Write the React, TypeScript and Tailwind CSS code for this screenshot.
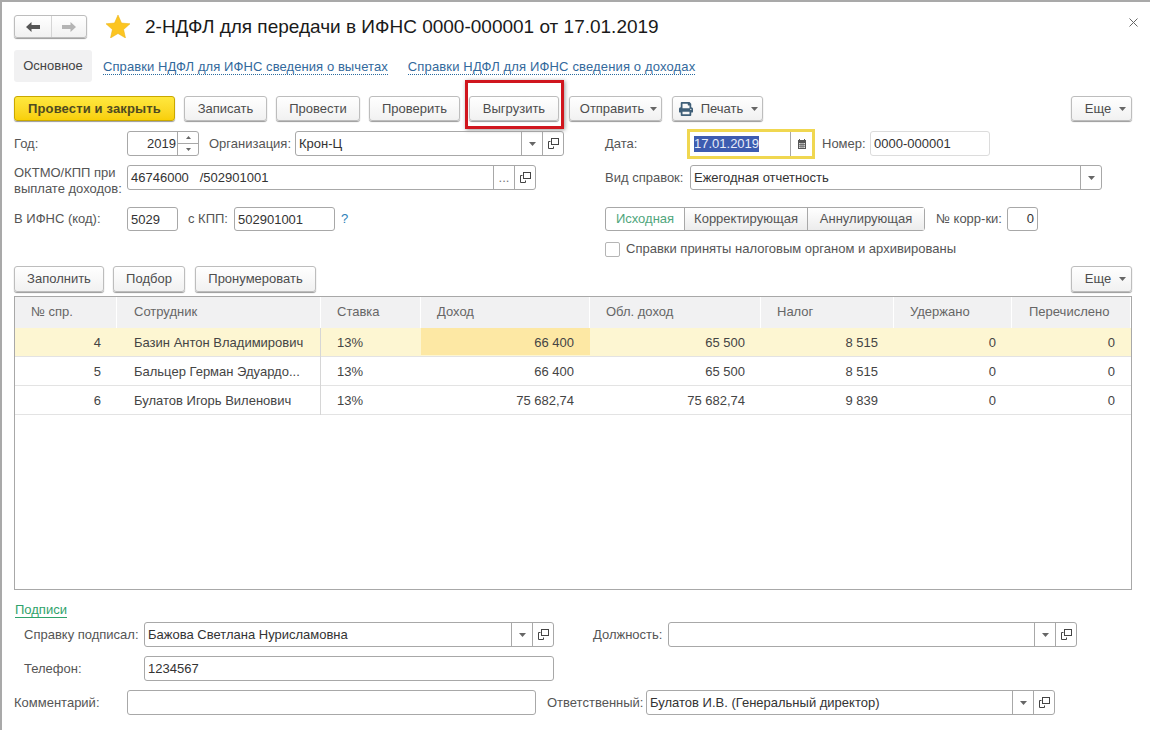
import { FaPrint } from "react-icons/fa"

const rows = [
  { n: "4", name: "Базин Антон Владимирович", income: "66 400", taxable: "65 500", tax: "8 515", active: true },
  { n: "5", name: "Бальцер Герман Эдуардо...", income: "66 400", taxable: "65 500", tax: "8 515", active: false },
  { n: "6", name: "Булатов Игорь Виленович", income: "75 682,74", taxable: "75 682,74", tax: "9 839", active: false },
]

function Caret() {
  return (
    <svg width="7" height="4" viewBox="0 0 7 4" className="shrink-0">
      <path d="M0 0h7L3.500 4z" fill="#666" />
    </svg>
  )
}

function OpenIcon() {
  return (
    <svg width="11" height="11" viewBox="0 0 11 11" fill="none" stroke="#444" strokeWidth="1">
      <rect x="3.500" y="0.500" width="7" height="6" fill="#fff" />
      <path d="M2.500 3.500H0.500V10.500H5.500V8.500" />
    </svg>
  )
}

function Btn({ className, children }: { className: string; children: React.ReactNode }) {
  return (
    <div
      className={
        "flex items-center justify-center rounded-[3px] border border-[#bdbdbd] bg-gradient-to-b from-white to-[#f1f1f1] text-[13px] text-[#4d4d4d] shadow-[0_1px_1px_#9a9a9a] " +
        className
      }
    >
      {children}
    </div>
  )
}

function Field({
  className,
  value,
  kind,
}: {
  className: string
  value?: string
  kind?: "select" | "dots" | "dropdown"
}) {
  return (
    <div className={"flex h-full items-stretch rounded-[3px] border border-[#a8a8a8] bg-white " + className}>
      <div className="min-w-0 flex-1 overflow-hidden pl-[3px] leading-[23px] whitespace-pre text-[#333]">{value}</div>
      {kind && (
        <div className="flex w-[21px] shrink-0 items-center justify-center border-l border-[#a8a8a8]">
          {kind === "dots" ? <span className="text-[#777]">...</span> : <Caret />}
        </div>
      )}
      {(kind === "select" || kind === "dots") && (
        <div className="flex w-[21px] shrink-0 items-center justify-center border-l border-[#a8a8a8]">
          <OpenIcon />
        </div>
      )}
    </div>
  )
}

function Label({ className, children }: { className: string; children: React.ReactNode }) {
  return <div className={"shrink-0 text-[#555] " + className}>{children}</div>
}

function HeadCell({ children, className }: { children: React.ReactNode; className: string }) {
  return <div className={"flex items-center border-r border-white pb-[2px] text-[#666] " + className}>{children}</div>
}

export default function App() {
  return (
    <div className="relative h-[730px] w-[1150px] overflow-hidden border-t-2 border-l-2 border-[#a9a9a9] bg-white pl-3 font-['Liberation_Sans',Arial,sans-serif] text-[13px]">
      {/* шапка */}
      <div className="mt-[13px] flex h-[23px] items-center">
        <div className="flex h-full w-[73px] rounded-[3px] border border-[#bdbdbd] bg-gradient-to-b from-white to-[#f1f1f1] shadow-[0_1px_1px_#9a9a9a]">
          <div className="flex w-[37px] items-center justify-center border-r border-[#d5d5d5]">
            <svg width="14" height="10" viewBox="0 0 14 10">
              <path d="M0 5l5.500-5v3H14v4H5.500v3z" fill="#555" />
            </svg>
          </div>
          <div className="flex flex-1 items-center justify-center">
            <svg width="14" height="10" viewBox="0 0 14 10">
              <path d="M14 5L8.500 0v3H0v4h8.500v3z" fill="#b4b4b4" />
            </svg>
          </div>
        </div>
        <svg width="24" height="23" viewBox="0 0 24 23" className="ml-[19px]">
          <path d="M12 0l3.500 8 8.500.8-6.400 5.700L19.500 23 12 18.500 4.500 23l1.900-8.500L0 8.800 8.500 8z" fill="#fcc521" stroke="#e9b010" strokeWidth="0.500" />
        </svg>
        <h1 className="ml-[15px] pt-[1px] text-[19px] font-normal text-[#1a1a1a]">
          2-НДФЛ для передачи в ИФНС 0000-000001 от 17.01.2019
        </h1>
        <svg width="9" height="9" viewBox="0 0 9 9" className="ml-auto mr-[12px] -mt-[8px]" stroke="#666" strokeWidth="1">
          <path d="M0.500 0.500l8 8M8.500 0.500l-8 8" />
        </svg>
      </div>

      {/* вкладки */}
      <div className="mt-[12px] flex h-[32px] items-center">
        <div className="flex h-full w-[78px] items-center justify-center rounded-[3px] bg-[#f1f1f2] text-[#444]">Основное</div>
        <a className="mt-[2px] ml-[11px] border-b border-dotted border-[#2a6a9e] leading-[15px] tracking-[0.08px] text-[#33699c]">Справки НДФЛ для ИФНС сведения о вычетах</a>
        <a className="mt-[2px] ml-[20px] border-b border-dotted border-[#2a6a9e] leading-[15px] tracking-[0.15px] text-[#33699c]">Справки НДФЛ для ИФНС сведения о доходах</a>
      </div>

      {/* команды */}
      <div className="mt-[14px] flex h-[25px]">
        <div className="flex w-[161px] items-center justify-center rounded-[3px] border border-[#c9a800] bg-gradient-to-b from-[#ffe83d] to-[#f8cf06] font-bold tracking-[0.15px] text-[#4f4a20] shadow-[0_1px_1px_#9a9a9a]">
          Провести и закрыть
        </div>
        <Btn className="ml-[9px] w-[83px]">Записать</Btn>
        <Btn className="ml-[9px] w-[84px]">Провести</Btn>
        <Btn className="ml-[9px] w-[91px]">Проверить</Btn>
        <Btn className="ml-[9px] w-[90px]">Выгрузить</Btn>
        <Btn className="ml-[10px] w-[93px] gap-[6px] pl-[6px]">
          Отправить <Caret />
        </Btn>
        <Btn className="ml-[10px] w-[91px] gap-[8px] pl-[2px]">
          <FaPrint className="text-[14px] text-[#3f5f78]" /> Печать <Caret />
        </Btn>
        <Btn className="ml-auto mr-[18px] w-[61px] gap-[8px] pl-[8px]">
          Еще <Caret />
        </Btn>
      </div>

      {/* реквизиты */}
      <div className="mt-[10px] flex h-[25px] items-center">
        <Label className="w-[113px]">Год:</Label>
        <div className="flex h-full w-[72px] rounded-[3px] border border-[#a8a8a8]">
          <div className="flex-1 pr-[1px] text-right leading-[23px] text-[#333]">2019</div>
          <div className="flex w-[21px] flex-col border-l border-[#a8a8a8]">
            <div className="flex flex-1 items-center justify-center border-b border-[#a8a8a8]">
              <svg width="5" height="3" viewBox="0 0 5 3"><path d="M0 3h5L2.500 0z" fill="#666" /></svg>
            </div>
            <div className="flex flex-1 items-center justify-center">
              <svg width="5" height="3" viewBox="0 0 5 3"><path d="M0 0h5L2.500 3z" fill="#666" /></svg>
            </div>
          </div>
        </div>
        <Label className="ml-[10px] w-[86px]">Организация:</Label>
        <Field className="w-[269px]" value="Крон-Ц" kind="select" />
        <Label className="ml-[41px] w-[82px]">Дата:</Label>
        <div className="flex h-[30px] w-[128px] shrink-0 border-[3px] border-[#f0d750]">
          <div className="flex flex-1 items-center pl-[4px]">
            <span className="bg-[#3d5cb0] leading-[16px] text-[#e8ecf8]">17.01.2019</span>
          </div>
          <div className="flex w-[22px] items-center justify-center border-l border-[#a8a8a8]">
            <svg width="10" height="10" viewBox="0 0 10 10">
              <path d="M1 1h8v9H1z" fill="#555" />
              <path d="M2.500 0v2M7.500 0v2" stroke="#555" />
              <path d="M2 4h6v5H2z" fill="#ddd" />
              <path d="M2 5.500h6M2 7.300h6M4 4v5M6 4v5" stroke="#555" strokeWidth="0.700" />
            </svg>
          </div>
        </div>
        <Label className="ml-[7px] w-[48px]">Номер:</Label>
        <Field className="w-[120px] border-[#dcdcdc]" value="0000-000001" />
      </div>

      <div className="mt-[9px] flex h-[25px] items-center">
        <Label className="w-[113px] pt-[6px] leading-[16px]">
          ОКТМО/КПП при
          <br />
          выплате доходов:
        </Label>
        <Field className="w-[409px]" value="46746000   /502901001" kind="dots" />
        <Label className="ml-[69px] w-[85px]">Вид справок:</Label>
        <Field className="w-[412px]" value="Ежегодная отчетность" kind="dropdown" />
      </div>

      <div className="mt-[17px] flex h-[24px] items-center">
        <Label className="w-[113px]">В ИФНС (код):</Label>
        <Field className="w-[51px]" value="5029" />
        <Label className="ml-[10px] w-[46px]">с КПП:</Label>
        <Field className="w-[101px]" value="502901001" />
        <span className="ml-[6px] w-[264px] text-[#2d7fb8]">?</span>
        <div className="flex h-full w-[320px] rounded-[3px] border border-[#a8a8a8] text-[#555]">
          <div className="flex w-[78px] items-center justify-center text-[#4fa67c]">Исходная</div>
          <div className="flex w-[124px] items-center justify-center border-x border-[#a8a8a8] bg-gradient-to-b from-white to-[#ececec]">Корректирующая</div>
          <div className="flex flex-1 items-center justify-center bg-gradient-to-b from-white to-[#ececec]">Аннулирующая</div>
        </div>
        <Label className="ml-[11px] w-[71px]">№ корр-ки:</Label>
        <div className="h-full w-[31px] rounded-[3px] border border-[#a8a8a8] pr-[3px] text-right leading-[22px] text-[#333]">0</div>
      </div>

      <div className="mt-[11px] flex h-[15px] items-center pl-[591px]">
        <div className="size-[15px] rounded-[2px] border border-[#b5b5b5] bg-white" />
        <span className="ml-[6px] -mt-[2px] text-[#555]">Справки приняты налоговым органом и архивированы</span>
      </div>

      {/* табличная часть */}
      <div className="mt-[9px] flex h-[26px]">
        <Btn className="w-[90px]">Заполнить</Btn>
        <Btn className="ml-[9px] w-[72px]">Подбор</Btn>
        <Btn className="ml-[10px] w-[121px]">Пронумеровать</Btn>
        <Btn className="ml-auto mr-[18px] w-[61px] gap-[8px] pl-[8px]">
          Еще <Caret />
        </Btn>
      </div>

      <div className="mt-[4px] h-[294px] w-[1118px] border border-[#a8a8a8]">
        <div className="grid h-[31px] grid-cols-[102px_204px_100px_169px_171px_133px_118px_1fr] bg-[#f1f1f2]">
          <HeadCell className="pl-[16px]">№ спр.</HeadCell>
          <HeadCell className="pl-[17px]">Сотрудник</HeadCell>
          <HeadCell className="pl-[16px]">Ставка</HeadCell>
          <HeadCell className="pl-[16px]">Доход</HeadCell>
          <HeadCell className="pl-[16px]">Обл. доход</HeadCell>
          <HeadCell className="pl-[16px]">Налог</HeadCell>
          <HeadCell className="pl-[16px]">Удержано</HeadCell>
          <HeadCell className="pl-[17px]">Перечислено</HeadCell>
        </div>
        {rows.map((r) => (
          <div
            key={r.n}
            className={
              "grid h-[29px] grid-cols-[102px_204px_100px_169px_171px_133px_118px_1fr] items-stretch border-b border-[#e3e3e3] leading-[29px] text-[#444] " +
              (r.active ? "bg-[#fdf6d2]" : "bg-white")
            }
          >
            <div className="pr-[16px] text-right">{r.n}</div>
            <div className="truncate border-r border-[#d6d6d6] pl-[17px]">{r.name}</div>
            <div className="pl-[16px]">13%</div>
            <div className={"h-[27px] pr-[16px] text-right " + (r.active ? "bg-[#fde8a4]" : "")}>{r.income}</div>
            <div className="pr-[16px] text-right">{r.taxable}</div>
            <div className="pr-[16px] text-right">{r.tax}</div>
            <div className="pr-[16px] text-right">0</div>
            <div className="pr-[16px] text-right">0</div>
          </div>
        ))}
      </div>

      {/* подписи */}
      <div className="mt-[12px] flex h-[16px] items-center pl-[1px]">
        <a className="border-b border-[#2fa36b] leading-[14px] text-[#2fa36b]">Подписи</a>
      </div>

      <div className="mt-[4px] flex h-[25px] items-center pl-[10px]">
        <Label className="w-[120px]">Справку подписал:</Label>
        <Field className="w-[410px]" value="Бажова Светлана Нурисламовна" kind="select" />
        <Label className="ml-[39px] w-[75px]">Должность:</Label>
        <Field className="w-[409px]" kind="select" />
      </div>

      <div className="mt-[9px] flex h-[25px] items-center pl-[10px]">
        <Label className="w-[120px]">Телефон:</Label>
        <Field className="w-[410px]" value="1234567" />
      </div>

      <div className="mt-[9px] flex h-[25px] items-center">
        <Label className="w-[113px]">Комментарий:</Label>
        <Field className="w-[409px]" />
        <Label className="ml-[11px] w-[99px]">Ответственный:</Label>
        <Field className="w-[409px]" value="Булатов И.В. (Генеральный директор)" kind="select" />
      </div>

      <div className="pointer-events-none absolute left-[463px] top-[78px] h-[49px] w-[99px] border-[3px] border-[#d0161e] shadow-[1px_1px_4px_#999]" />
    </div>
  )
}
